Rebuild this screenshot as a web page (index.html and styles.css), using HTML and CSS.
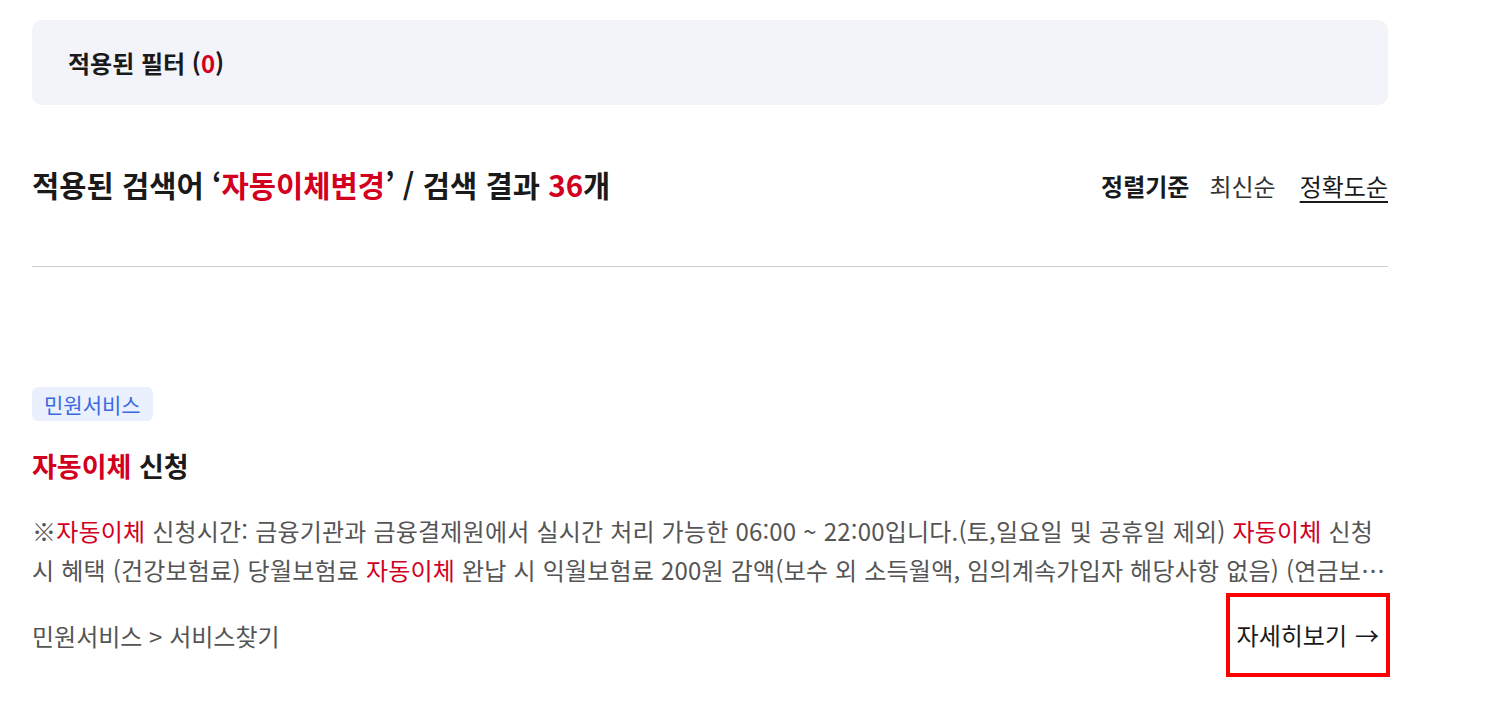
FILE: index.html
```html
<!DOCTYPE html>
<html lang="ko">
<head>
    <meta charset="utf-8">
    <title>검색 결과</title>
    <link rel="stylesheet" href="styles.css">
</head>
<body>
    <div id="container">
        <div class="filter-box">
            <span class="filter-title">적용된 필터 (<em class="hl">0</em>)</span>
        </div>

        <div class="result-head">
            <h2 class="result-title">적용된 검색어 ‘<em class="hl">자동이체변경</em>’ / 검색 결과 <em class="hl">36</em>개</h2>
            <div class="sort">
                <span class="sort-label">정렬기준</span>
                <a class="sort-item">최신순</a>
                <a class="sort-item active">정확도순</a>
            </div>
        </div>

        <ul class="result-list">
            <li class="result-item">
                <span class="tag">민원서비스</span>
                <h3 class="item-title"><em class="hl">자동이체</em> 신청</h3>
                <p class="item-desc">※<em class="hl">자동이체</em> 신청시간: 금융기관과 금융결제원에서 실시간 처리 가능한 06:00 ~ 22:00입니다.(토,일요일 및 공휴일 제외) <em class="hl">자동이체</em> 신청시 혜택 (건강보험료) 당월보험료 <em class="hl">자동이체</em> 완납 시 익월보험료 200원 감액(보수 외 소득월액, 임의계속가입자 해당사항 없음) (연금보험료) 당월보험료 <em class="hl">자동이체</em> 완납 시 ...</p>
                <div class="item-foot">
                    <span class="path">민원서비스 &gt; 서비스찾기</span>
                    <a class="more">자세히보기 <span class="arrow">→</span></a>
                </div>
            </li>
        </ul>
    </div>
</body>
</html>
```

FILE: styles.css
```css
:root {
    --text-color: #1a1a1a;
    --sub-color: #555;
    --hl-color: #d2001e;
    --line-color: #cfcfcf;
}

html, body {
    margin: 0;
    padding: 0;
    background: #fff;
    font-family: "Noto Sans CJK KR", "Noto Sans", sans-serif;
    color: var(--text-color);
}

#container {
    width: 1356px;
    padding: 20px 0 0 32px;
}

em.hl {
    font-style: normal;
    color: var(--hl-color);
}

.filter-box {
    height: 85px;
    display: flex;
    align-items: center;
    padding-left: 36px;
    background: #f3f4f9;
    border-radius: 10px;
}

.filter-title {
    font-size: 24px;
    font-weight: 700;
}

.result-head {
    display: flex;
    justify-content: space-between;
    align-items: center;
    margin-top: 60px;
    padding-bottom: 61px;
    border-bottom: 1px solid var(--line-color);
}

.result-title {
    margin: 0;
    font-size: 29.6px;
    font-weight: 700;
    line-height: 40px;
}

.sort {
    display: flex;
    align-items: center;
    font-size: 24px;
}

.sort-label {
    font-weight: 700;
    margin-right: 20px;
}

.sort-item {
    color: #333;
    margin-left: 24px;
}

.sort-label + .sort-item {
    margin-left: 0;
}

.sort-item.active {
    color: var(--text-color);
    text-decoration: underline;
    text-underline-offset: 5px;
}

.result-list {
    list-style: none;
    margin: 0;
    padding: 120px 0 0;
}

.tag {
    display: inline-block;
    padding: 0 12px;
    height: 34px;
    line-height: 34px;
    font-size: 21px;
    color: #3b6ae0;
    background: #eaf0fd;
    border-radius: 6px;
}

.item-title {
    margin: 25px 0 0;
    font-size: 27px;
    font-weight: 700;
    line-height: 40px;
}

.item-desc {
    margin: 25px 0 0;
    font-size: 24px;
    letter-spacing: 0.2px;
    line-height: 39px;
    color: var(--sub-color);
    display: -webkit-box;
    -webkit-line-clamp: 2;
    -webkit-box-orient: vertical;
    overflow: hidden;
}

.item-foot {
    display: flex;
    justify-content: space-between;
    align-items: center;
    margin-top: 4px;
}

.path {
    font-size: 24px;
    color: var(--sub-color);
}

.more {
    display: flex;
    align-items: center;
    gap: 8px;
    margin-right: -2px;
    padding: 20px 7px;
    font-size: 24px;
    line-height: 36px;
    color: var(--text-color);
    border: 4px solid #ff0000;
}
```
